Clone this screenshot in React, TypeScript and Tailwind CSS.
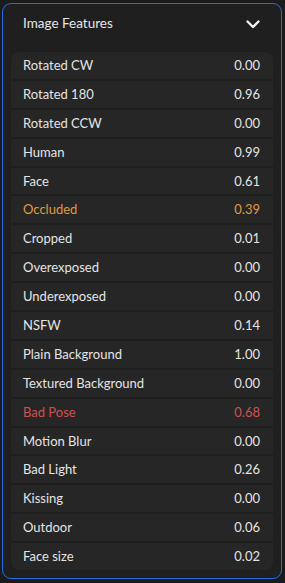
import React from "react";

type Feature = { label: string; value: string; tone?: "warn" | "bad" };

const features: Feature[] = [
  { label: "Rotated CW", value: "0.00" },
  { label: "Rotated 180", value: "0.96" },
  { label: "Rotated CCW", value: "0.00" },
  { label: "Human", value: "0.99" },
  { label: "Face", value: "0.61" },
  { label: "Occluded", value: "0.39", tone: "warn" },
  { label: "Cropped", value: "0.01" },
  { label: "Overexposed", value: "0.00" },
  { label: "Underexposed", value: "0.00" },
  { label: "NSFW", value: "0.14" },
  { label: "Plain Background", value: "1.00" },
  { label: "Textured Background", value: "0.00" },
  { label: "Bad Pose", value: "0.68", tone: "bad" },
  { label: "Motion Blur", value: "0.00" },
  { label: "Bad Light", value: "0.26" },
  { label: "Kissing", value: "0.00" },
  { label: "Outdoor", value: "0.06" },
  { label: "Face size", value: "0.02" },
];

export default function App() {
  return (
    <div
      className="w-[285px] h-[583px] bg-[#1b1b1b] pt-[3px] pl-[2px]"
      style={{ fontFamily: "Lato, 'Noto Sans', sans-serif" }}
    >
      <div className="w-[280px] border border-[#1f6fe0] rounded-[9px] bg-[#1f1f1f] px-2 pb-2">
        <div className="h-[48px] flex items-start justify-between pl-3 pr-[13px] pt-[9px]">
          <span className="text-[13.5px] leading-[20px] text-[#e6e6e6]">Image Features</span>
          <svg width="14" height="9" viewBox="0 0 14 9" fill="none" className="mt-[7px]">
            <path d="M1.5 1.5 L7 7 L12.5 1.5" stroke="#f2f2f2" strokeWidth="2.4" strokeLinecap="round" strokeLinejoin="round" />
          </svg>
        </div>
        <div className="flex flex-col gap-[2px] rounded-lg overflow-hidden">
          {features.map((f) => {
            const color =
              f.tone === "warn" ? "text-[#e09a3e]" : f.tone === "bad" ? "text-[#d05252]" : "text-[#e4e4e4]";
            return (
              <div
                key={f.label}
                className={`h-[26.9px] bg-[#262626] flex items-center justify-between pl-3 pr-[13px] text-[13px] leading-[18px] ${color}`}
              >
                <span className="-mt-px">{f.label}</span>
                <span className="-mt-px">{f.value}</span>
              </div>
            );
          })}
        </div>
      </div>
    </div>
  );
}
